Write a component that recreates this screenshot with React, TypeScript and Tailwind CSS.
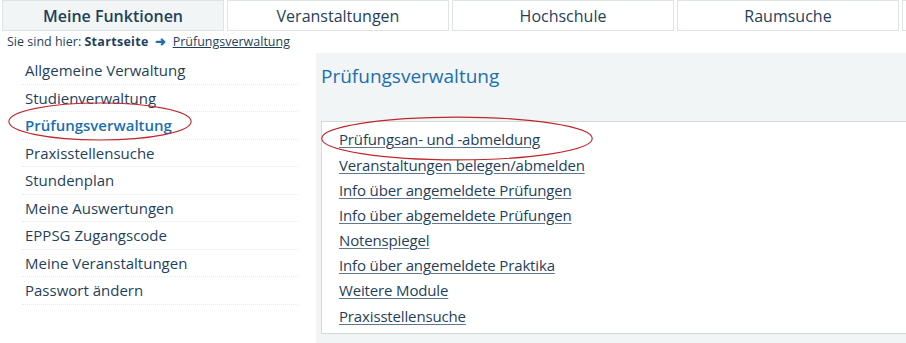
import React from 'react';

const tabs = ['Meine Funktionen', 'Veranstaltungen', 'Hochschule', 'Raumsuche'];

const sideItems = [
  'Allgemeine Verwaltung',
  'Studienverwaltung',
  'Prüfungsverwaltung',
  'Praxisstellensuche',
  'Stundenplan',
  'Meine Auswertungen',
  'EPPSG Zugangscode',
  'Meine Veranstaltungen',
  'Passwort ändern',
];

const links = [
  'Prüfungsan- und -abmeldung',
  'Veranstaltungen belegen/abmelden',
  'Info über angemeldete Prüfungen',
  'Info über abgemeldete Prüfungen',
  'Notenspiegel',
  'Info über angemeldete Praktika',
  'Weitere Module',
  'Praxisstellensuche',
];

// red hand-drawn marker ring
const Ring = ({ className }: { className: string }) => (
  <svg className={className} viewBox="0 0 100 40" preserveAspectRatio="none">
    <ellipse cx="50" cy="20" rx="49" ry="19" fill="none" stroke="#c0262d" strokeWidth="1.1" vectorEffect="non-scaling-stroke" />
  </svg>
);

export default function App() {
  return (
    <div className="w-[906px] h-[343px] overflow-hidden bg-white text-[#1f3f5a] font-['Open_Sans',sans-serif]">
      {/* Top tabs */}
      <div className="flex gap-[3px] pl-[2px] h-[31px]">
        {tabs.map((t, i) => (
          <div
            key={t}
            className={
              'w-[222px] shrink-0 flex items-center justify-center border border-[#dfe5e5] text-[16px] ' +
              (i === 0 ? 'bg-[#f1f5f5] font-semibold' : 'bg-white')
            }
          >
            {t}
          </div>
        ))}
        <div className="w-[20px] shrink-0 border border-[#dfe5e5]" />
      </div>

      {/* Breadcrumb */}
      <div className="flex items-center h-[22px] pl-[7px] text-[12.5px] leading-none">
        <span>Sie sind hier:&nbsp;</span>
        <span className="font-bold tracking-[0.3px]">Startseite</span>
        <span className="ml-[6px] mr-[7px] text-[#1a6fb0] font-bold">➜</span>
        <span className="underline">Prüfungsverwaltung</span>
      </div>

      <div className="flex">
        {/* Sidebar */}
        <div className="w-[316px] shrink-0 pl-[22px] pr-[18px] pt-[4px] relative">
          {sideItems.map((s, i) => (
            <div
              key={s}
              className={
                'h-[27.5px] flex items-center pl-[3px] border-b border-dotted border-[#e6eaea] text-[15px] ' +
                (i === 2 ? 'text-[#1a6fb0] font-semibold' : '')
              }
            >
              {s}
            </div>
          ))}
          <Ring className="absolute left-[7px] top-[49px] w-[186px] h-[39px]" />
        </div>

        {/* Content */}
        <div className="flex-1 bg-[#f1f5f5] pl-[5px] pt-[8px] h-[290px]">
          <h1 className="text-[19px] text-[#1a6fb0] h-[30px] leading-[30px]">Prüfungsverwaltung</h1>
          <div className="mt-[30px] bg-white border border-[#d3d8d8] border-r-0 pl-[17px] pt-[5px] pb-[4px] relative">
            {links.map((l) => (
              <div key={l} className="h-[25.2px] flex items-center text-[15px] tracking-[-0.15px]">
                <span className="underline underline-offset-2 decoration-[#5f7a90]">{l}</span>
              </div>
            ))}
            <Ring className="absolute left-[-3px] top-[-6px] w-[276px] h-[45px]" />
          </div>
        </div>
      </div>
    </div>
  );
}
